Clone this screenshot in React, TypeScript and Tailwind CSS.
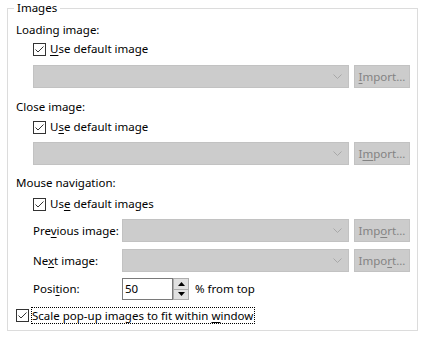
import React from "react";

function Check() {
  return (
    <span className="w-[13px] h-[13px] border border-[#333333] bg-white flex items-center justify-center shrink-0">
      <svg width="11" height="11" viewBox="0 0 11 11">
        <path d="M1.5 5.5 L4 8 L9.5 2.5" fill="none" stroke="#333333" strokeWidth="1" />
      </svg>
    </span>
  );
}

function U({ children }: { children: React.ReactNode }) {
  return <span className="underline underline-offset-[2px] decoration-1">{children}</span>;
}

function Combo() {
  return (
    <div className="flex-1 h-[23px] bg-[#cccccc] border border-[#c2c2c2] flex items-center justify-end pr-[6px]">
      <svg width="9" height="5" viewBox="0 0 9 5">
        <path d="M0.5 0.5 L4.5 4.5 L8.5 0.5" fill="none" stroke="#a8a8a8" strokeWidth="1" />
      </svg>
    </div>
  );
}

function ImportBtn({ pre, u, post }: { pre: string; u: string; post: string }) {
  return (
    <div className="w-[56px] h-[23px] bg-[#cccccc] border border-[#c2c2c2] text-[#838383] flex items-center justify-center whitespace-nowrap">
      <span>
        {pre}
        <U>{u}</U>
        {post}
      </span>
    </div>
  );
}

export default function App() {
  return (
    <div
      className="w-[423px] h-[339px] bg-white pt-[8px] pl-[7px] text-[11.5px] leading-[16px] text-black whitespace-nowrap"
      style={{ fontFamily: '"Noto Sans", "Open Sans", sans-serif' }}
    >
      <div className="relative w-[411px] h-[323px] border border-[#dcdcdc]">
        <span className="absolute top-[-9px] left-[6px] bg-white px-[3px] leading-[16px]">Images</span>
        <div className="flex flex-col pl-[8px] pr-[7px] pt-[13px]">
          <div className="h-[16px] flex items-center">Loading image:</div>
          <div className="mt-[3px] h-[16px] flex items-center gap-[4px] ml-[17px]">
            <Check />
            <span>
              <U>U</U>se default image
            </span>
          </div>
          <div className="mt-[8px] flex gap-[5px] ml-[17px]">
            <Combo />
            <ImportBtn pre="" u="I" post="mport..." />
          </div>

          <div className="mt-[11px] h-[16px] flex items-center">Close image:</div>
          <div className="mt-[4px] h-[16px] flex items-center gap-[4px] ml-[17px]">
            <Check />
            <span>
              U<U>s</U>e default image
            </span>
          </div>
          <div className="mt-[7px] flex gap-[5px] ml-[17px]">
            <Combo />
            <ImportBtn pre="I" u="m" post="port..." />
          </div>

          <div className="mt-[10px] h-[16px] flex items-center">Mouse navigation:</div>
          <div className="mt-[5px] h-[16px] flex items-center gap-[4px] ml-[17px]">
            <Check />
            <span>
              Us<U>e</U> default images
            </span>
          </div>
          <div className="mt-[7px] flex ml-[17px] items-center">
            <span className="w-[89px] shrink-0">
              Pre<U>v</U>ious image:
            </span>
            <div className="flex-1 flex gap-[5px]">
              <Combo />
              <ImportBtn pre="Imp" u="o" post="rt..." />
            </div>
          </div>
          <div className="mt-[7px] flex ml-[17px] items-center">
            <span className="w-[89px] shrink-0">
              Ne<U>x</U>t image:
            </span>
            <div className="flex-1 flex gap-[5px]">
              <Combo />
              <ImportBtn pre="Impo" u="r" post="t..." />
            </div>
          </div>
          <div className="mt-[6px] flex ml-[17px] items-center">
            <span className="w-[89px] shrink-0">
              Posi<U>t</U>ion:
            </span>
            <div className="flex h-[22px]">
              <div className="w-[51px] h-[22px] border border-[#7a7a7a] flex items-center pl-[2px]">50</div>
              <div className="w-[16px] h-[22px] border border-[#adadad] flex flex-col bg-[#e1e1e1]">
                <div className="flex-1 flex items-center justify-center border-b border-[#adadad]">
                  <svg width="7" height="4" viewBox="0 0 7 4">
                    <path d="M0 4 L3.5 0 L7 4 Z" fill="#000" />
                  </svg>
                </div>
                <div className="flex-1 flex items-center justify-center">
                  <svg width="7" height="4" viewBox="0 0 7 4">
                    <path d="M0 0 L3.5 4 L7 0 Z" fill="#000" />
                  </svg>
                </div>
              </div>
            </div>
            <span className="ml-[6px]">% from top</span>
          </div>
          <div className="mt-[7px] h-[17px] flex items-center gap-[2px]">
            <Check />
            <span className="border border-dotted border-black leading-[15px] pr-[1px]">
              Scale pop-up images to fit within <U>w</U>indow
            </span>
          </div>
        </div>
      </div>
    </div>
  );
}
